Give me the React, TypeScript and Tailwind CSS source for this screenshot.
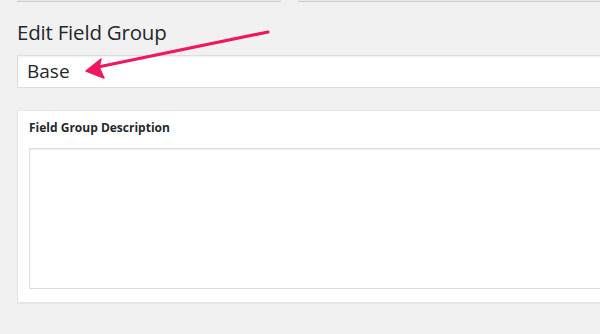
const Arrow = () => (
  <svg
    className="absolute left-0 top-0 pointer-events-none"
    width="600"
    height="334"
    viewBox="0 0 600 334"
  >
    <path d="M268 32 L98 67" stroke="#f0175c" strokeWidth="3.2" strokeLinecap="round" fill="none" />
    <path d="M86 71 L101 59 L99 67 L104 78 Z" fill="#f0175c" stroke="#f0175c" strokeWidth="1.5" strokeLinejoin="round" />
  </svg>
)

export default function App() {
  return (
    <div
      className="relative h-[334px] w-[600px] overflow-hidden bg-[#f1f1f1] text-[#23282d]"
      style={{ fontFamily: '"Open Sans", "Noto Sans", sans-serif' }}
    >
      <div className="w-[700px] pl-[17px]">
        <div className="flex gap-[17px]">
          <div className="h-[2px] w-[264px] border-b border-[#cccccc] bg-[#e8e8e8]" />
          <div className="h-[2px] flex-1 border-b border-[#cccccc] bg-[#e8e8e8]" />
        </div>

        <h1 className="mt-[16px] h-[28px] text-[20.5px] leading-[28px] font-normal tracking-[-0.2px]">
          Edit Field Group
        </h1>

        <div className="mt-[9px] flex h-[33px] items-center border border-[#dddddd] bg-white pl-[9px] text-[19px] shadow-[inset_0_1px_2px_rgba(0,0,0,0.07)]">
          Base
        </div>

        <div className="mt-[22px] h-[193px] border border-[#e5e5e5] bg-white pt-[8px] pl-[11px] shadow-[0_1px_1px_rgba(0,0,0,0.04)]">
          <div className="text-[12px] leading-[18px] font-bold">Field Group Description</div>
          <div className="mt-[11px] h-[141px] border border-[#dddddd] bg-white shadow-[inset_0_1px_2px_rgba(0,0,0,0.07)]" />
        </div>
      </div>
      <Arrow />
    </div>
  )
}
